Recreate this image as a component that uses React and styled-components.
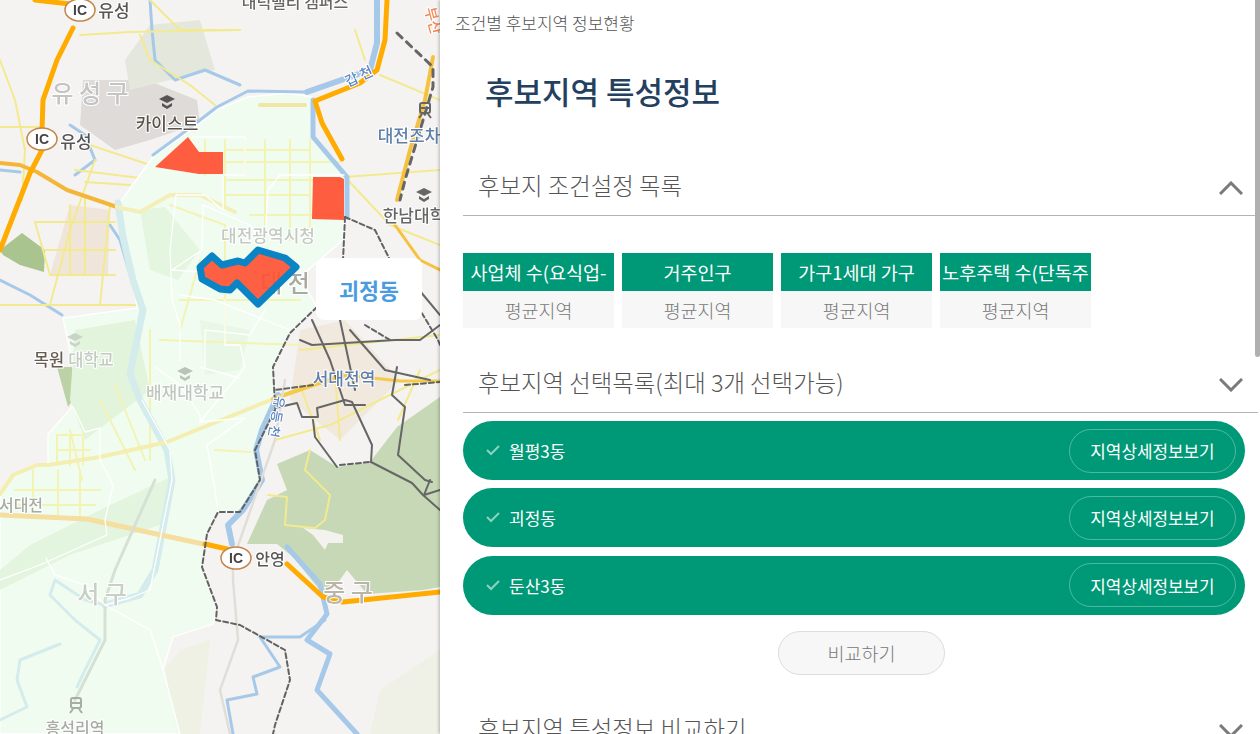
import React from "react";
import styled, { createGlobalStyle } from "styled-components";

const GREEN = "#009977";
const FONT = `"Noto Sans CJK KR", "Noto Sans", sans-serif`;

const GlobalStyle = createGlobalStyle`
  html, body {
    margin: 0;
    height: 100%;
    overflow: hidden;
    background: #fff;
    font-family: ${FONT};
  }
  * {
    box-sizing: border-box;
  }
`;

const Page = styled.div`
  display: flex;
  width: 1260px;
  height: 734px;
  overflow: hidden;
`;

const MapPane = styled.div`
  position: relative;
  flex: 0 0 440px;
  height: 734px;
  overflow: hidden;
  background: #f5f3f1;
`;

const MapSvg = styled.svg`
  display: block;
  width: 440px;
  height: 734px;
  filter: blur(0.5px);
`;

const RegionLabel = styled.div`
  position: absolute;
  left: 316px;
  top: 258px;
  width: 106px;
  height: 62px;
  display: flex;
  align-items: center;
  justify-content: center;
  background: #fff;
  border-radius: 8px;
  color: #4a9be0;
  font-size: 21.7px;
  font-weight: 700;
`;

const Panel = styled.div`
  position: relative;
  flex: 1;
  height: 734px;
  overflow: hidden;
  background: #fff;
  box-shadow: -1px 0 3px rgba(0, 0, 0, 0.25);
`;

const ScrollThumb = styled.div`
  position: absolute;
  top: 0;
  right: 0;
  width: 5px;
  height: 357px;
  background: #b0b0b0;
  border-radius: 0 0 3px 3px;
`;

const Crumb = styled.div`
  padding: 13px 0 0 15px;
  height: 72px;
  font-size: 17px;
  font-weight: 300;
  line-height: 20px;
  color: #555;
`;

const Title = styled.h1`
  margin: 0;
  padding-left: 45px;
  height: 83px;
  font-size: 31px;
  line-height: 38px;
  font-weight: 500;
  color: #24405f;
`;

const Content = styled.div`
  margin-left: 23px;
  width: 795px;
`;

const SectionHead = styled.div`
  display: flex;
  align-items: center;
  justify-content: space-between;
  height: 61px;
  padding: 0 15px;
  border-bottom: 1px solid #b4b4b4;
  font-size: 23.4px;
  font-weight: 300;
  color: #555;
`;

const Chevron = styled.svg`
  display: block;
  margin-top: 6px;
  width: 24px;
  height: 14px;
`;

const Tags = styled.div`
  display: flex;
  gap: 8px;
  margin: 37px 0 24px;
`;

const Tag = styled.div`
  width: 151px;
`;

const TagHead = styled.div`
  height: 38px;
  display: flex;
  align-items: center;
  justify-content: center;
  overflow: hidden;
  white-space: nowrap;
  background: ${GREEN};
  color: #fff;
  font-size: 18.5px;
`;

const TagBody = styled.div`
  height: 37px;
  display: flex;
  align-items: center;
  justify-content: center;
  background: #f7f7f7;
  color: #777;
  font-size: 18.4px;
  font-weight: 300;
`;

const Pills = styled.div`
  display: flex;
  flex-direction: column;
  gap: 8.4px;
  margin-top: 8px;
  width: 782px;
`;

const Pill = styled.div`
  height: 59px;
  display: flex;
  align-items: center;
  padding: 0 9px 0 23px;
  border-radius: 30px;
  background: ${GREEN};
  color: #fff;
  font-size: 17px;
`;

const Check = styled.svg`
  width: 14px;
  height: 11px;
  margin-right: 9px;
`;

const PillName = styled.span`
  flex: 1;
`;

const DetailButton = styled.button`
  width: 167px;
  height: 44px;
  padding: 0;
  border: 1px solid rgba(255, 255, 255, 0.3);
  border-radius: 22px;
  background: transparent;
  color: #fff;
  font-family: inherit;
  font-size: 16.9px;
`;

const CompareRow = styled.div`
  display: flex;
  justify-content: center;
  margin: 16px 0 23px;
  width: 797px;
`;

const CompareButton = styled.button`
  width: 167px;
  height: 44px;
  padding: 0;
  border: 1px solid #ddd;
  border-radius: 22px;
  background: #f7f7f7;
  color: #777;
  font-family: inherit;
  font-size: 18.5px;
  font-weight: 300;
`;

const tags = ["사업체 수(요식업-", "거주인구", "가구1세대 가구", "노후주택 수(단독주"];
const places = ["월평3동", "괴정동", "둔산3동"];

const pts = (list) => list.map((p) => p.join(",")).join(" ");

const Line = ({ p, c, w, dash, o }) => (
  <polyline
    points={pts(p)}
    fill="none"
    stroke={c}
    strokeWidth={w}
    strokeDasharray={dash}
    strokeOpacity={o}
    strokeLinejoin="round"
    strokeLinecap="round"
  />
);

const region = [[248, 97], [287, 93], [312, 97], [311, 137], [333, 157], [344, 177], [343, 240], [300, 277], [317, 307], [290, 333], [273, 367], [275, 387], [273, 410], [255, 450], [260, 480], [240, 512], [218, 512], [207, 534], [202, 567], [217, 607], [213, 624], [173, 637], [163, 669], [180, 734], [0, 734], [0, 494], [13, 475], [37, 465], [48, 465], [48, 434], [72, 407], [76, 380], [63, 318], [137, 308], [133, 280], [118, 205], [153, 157], [187, 133], [217, 110]];

const mountain = [[277, 464], [310, 450], [337, 467], [370, 462], [397, 427], [440, 397], [440, 587], [423, 590], [367, 594], [347, 570], [337, 584], [323, 594], [293, 557], [277, 544], [247, 544], [267, 500], [287, 490]];

const minorRoads = [
  [[0, 60], [15, 100], [25, 150], [22, 200]], [[80, 35], [130, 32], [240, 30]], [[140, 35], [150, 60], [190, 85], [215, 105]],
  [[0, 127], [40, 127]], [[90, 145], [150, 165]], [[35, 222], [115, 222]], [[35, 222], [50, 275], [115, 275]], [[0, 305], [140, 305]],
  [[95, 160], [70, 230], [50, 305]], [[110, 205], [100, 305]], [[75, 170], [140, 178]], [[85, 182], [130, 185]],
  [[45, 250], [115, 250]], [[70, 205], [70, 275]], [[85, 195], [85, 275]],
  [[345, 177], [440, 170]], [[380, 75], [440, 100]], [[355, 30], [365, 60]], [[345, 177], [390, 225], [440, 245]],
  [[300, 350], [440, 335]], [[275, 440], [330, 425], [440, 370]], [[300, 385], [320, 440]], [[335, 375], [340, 440]],
  [[310, 450], [305, 470], [330, 495], [325, 520], [315, 528], [285, 525], [287, 497], [268, 495]],
  [[420, 370], [398, 420]], [[150, 0], [180, 30], [240, 30]],
];

const paleRoads = [
  [[170, 205], [225, 225], [225, 340]], [[225, 140], [225, 205]], [[245, 140], [245, 175]], [[265, 140], [265, 240]], [[290, 140], [290, 240]], [[310, 140], [310, 240]], [[205, 140], [205, 175]],
  [[225, 150], [310, 150]], [[225, 162], [340, 162]], [[225, 180], [340, 180]], [[225, 195], [310, 195]], [[250, 215], [340, 215]],
  [[100, 400], [135, 470]], [[70, 430], [82, 480]], [[115, 385], [145, 460]],
  [[57, 435], [83, 435]], [[57, 450], [90, 450]], [[57, 435], [57, 465]], [[70, 435], [70, 465]], [[83, 435], [83, 465]],
  [[15, 490], [100, 490]], [[15, 505], [95, 505]], [[33, 470], [33, 512]], [[58, 470], [58, 515]], [[80, 470], [80, 515]],
  [[150, 330], [150, 460]], [[215, 450], [250, 452]], [[180, 300], [300, 300]], [[160, 340], [300, 345]], [[200, 260], [180, 330]],
];

const whiteLines = [
  [[193, 137], [245, 137], [245, 175], [223, 175]], [[223, 175], [223, 210], [205, 195], [176, 195], [170, 250], [172, 300], [180, 325], [180, 360]],
  [[203, 205], [202, 250], [172, 270]], [[203, 205], [250, 225], [260, 240]], [[344, 175], [280, 175], [268, 190], [265, 240]], [[172, 270], [200, 272]],
  [[180, 295], [215, 300], [265, 320], [290, 330]], [[265, 310], [250, 335], [205, 330], [205, 367]], [[155, 367], [180, 385], [200, 415], [200, 422], [245, 418], [207, 445], [215, 490], [218, 512]],
  [[73, 407], [85, 432], [100, 428], [100, 460], [113, 485], [105, 520], [107, 535], [40, 565], [0, 580]], [[142, 400], [170, 450], [172, 480], [150, 590], [130, 598], [105, 605]],
  [[46, 558], [55, 575], [85, 585], [105, 605], [150, 630], [163, 669]], [[225, 300], [225, 345], [240, 345], [245, 367], [200, 422]], [[200, 367], [240, 378]],
];

const riversUnder = [
  [[0, 170], [20, 172]], [[150, 0], [152, 30], [155, 60], [175, 80], [205, 70], [240, 85]], [[0, 280], [30, 295], [62, 315]],
  [[70, 125], [85, 135], [95, 160], [75, 175]], [[110, 225], [120, 240], [133, 285]],
];

const riversOver = [
  { p: [[377, 0], [377, 43], [370, 70], [307, 92]], w: 6 },
  { p: [[307, 92], [248, 91], [217, 107], [187, 130], [153, 155]], w: 3 },
  { p: [[313, 100], [313, 137], [347, 177], [347, 217]], w: 5 },
  { p: [[278, 395], [262, 430], [256, 450], [262, 480], [243, 510], [228, 525], [232, 544]], w: 6 },
  { p: [[287, 547], [320, 584], [327, 614], [307, 640], [330, 654], [317, 690], [357, 734]], w: 5 },
  { p: [[260, 637], [300, 637], [325, 620]], w: 3 },
  { p: [[260, 637], [280, 667], [253, 677], [257, 694], [227, 700], [233, 734]], w: 3 },
];

const paleRivers = [
  { p: [[118, 203], [123, 237], [133, 280], [143, 310], [130, 374], [140, 400], [167, 450], [172, 480], [155, 570], [140, 595], [105, 605]], w: 7 },
  { p: [[105, 605], [85, 600], [55, 580], [50, 595], [75, 620], [100, 640], [85, 670], [77, 687]], w: 3 },
  { p: [[60, 644], [20, 660], [17, 680], [27, 707], [0, 720]], w: 3 },
];

const dashed = [
  [[345, 217], [343, 260]], [[345, 217], [375, 230], [390, 260], [438, 340], [440, 345]], [[317, 307], [290, 333], [273, 367], [275, 405]],
  [[275, 410], [255, 450], [260, 480], [240, 512], [218, 512], [207, 534], [202, 567], [217, 607], [216, 620], [240, 625], [285, 650], [290, 680], [275, 725], [273, 734]],
  [[365, 325], [390, 340]], [[313, 385], [275, 390]], [[405, 385], [440, 382]], [[340, 465], [370, 462]],
];

const solid = [
  [[312, 320], [330, 360], [345, 405], [365, 405]], [[275, 408], [297, 403], [302, 417], [318, 417], [317, 408], [345, 400], [352, 402], [372, 445], [371, 462]],
  [[313, 420], [315, 437], [337, 467]], [[371, 462], [412, 483], [423, 495], [440, 510]], [[430, 480], [424, 495], [440, 490]],
  [[397, 367], [392, 395], [405, 407], [398, 455], [425, 480], [432, 482]], [[340, 320], [355, 390]], [[395, 340], [420, 340], [440, 325]],
  [[350, 330], [385, 370], [430, 380]], [[300, 340], [312, 345], [395, 340]], [[415, 285], [440, 315]],
];

const labels = [
  { t: "유성", x: 114, y: 17, s: 17, c: "#555" },
  { t: "대덕밸리 캠퍼스", x: 295, y: 8, s: 16, c: "#666" },
  { t: "유 성 구", x: 90, y: 102, s: 24, c: "#c4c4c4" },
  { t: "카이스트", x: 167, y: 130, s: 17, c: "#5c5248" },
  { t: "유성", x: 76, y: 148, s: 17, c: "#555" },
  { t: "대전조차", x: 409, y: 142, s: 17, c: "#5f7fa8" },
  { t: "한남대학", x: 414, y: 222, s: 17, c: "#666" },
  { t: "대전광역시청", x: 268, y: 242, s: 17, c: "#c3cac2" },
  { t: "대 전", x: 285, y: 292, s: 24, c: "#a9aba3" },
  { t: "목원", x: 49, y: 366, s: 16.5, c: "#665b50" },
  { t: "대학교", x: 91, y: 366, s: 16.5, c: "#c3cac2" },
  { t: "배재대학교", x: 185, y: 399, s: 17, c: "#c0c7bf" },
  { t: "서대전역", x: 344, y: 385, s: 17, c: "#5f7fa8" },
  { t: "서대전", x: 21, y: 511, s: 16, c: "#a6aca2" },
  { t: "안영", x: 270, y: 565, s: 16, c: "#555" },
  { t: "서 구", x: 102, y: 603, s: 24, c: "#c9cec6" },
  { t: "중 구", x: 348, y: 601, s: 24, c: "#b9b5a8" },
  { t: "흥석리역", x: 75, y: 734, s: 16, c: "#a6aca2" },
];

const IcBadge = ({ x, y }) => (
  <g>
    <ellipse cx={x} cy={y} rx={15} ry={11} fill="#fff" stroke="#c2854a" strokeWidth="1.5" />
    <text x={x} y={y + 5} textAnchor="middle" fontFamily={"Liberation Sans"} fontSize="14" fontWeight="700" fill="#444">IC</text>
  </g>
);

const Cap = ({ x, y, c }) => (
  <g fill={c}>
    <polygon points={`${x - 8},${y - 3} ${x},${y - 7} ${x + 8},${y - 3} ${x},${y + 1}`} />
    <path d={`M${x - 5} ${y + 1} l5 3 l5 -3 v3 l-5 3 l-5 -3 z`} />
  </g>
);

const Train = ({ x, y, c }) => (
  <g fill="none" stroke={c} strokeWidth="2">
    <rect x={x - 5} y={y - 7} width="10" height="10" rx="2" />
    <path d={`M${x - 5} ${y - 2} h10 M${x - 3} ${y + 4} l-3 4 M${x + 3} ${y + 4} l3 4`} />
  </g>
);

const MapPicture = () => (
  <MapSvg viewBox="0 0 440 734">
    <polygon points={pts([[147, 80], [197, 100], [200, 123], [150, 140], [115, 150], [80, 125], [83, 80]])} fill="#dedbd9" />
    <polygon points={pts([[125, 60], [150, 25], [200, 20], [215, 70], [170, 80], [130, 90]])} fill="#e4e8dc" />
    <polygon points={pts([[0, 250], [22, 233], [45, 250], [44, 272], [20, 265], [3, 255]])} fill="#a9c48e" />
    <polygon points={pts([[57, 367], [72, 367], [76, 395], [68, 407], [62, 385]])} fill="#bdd1a6" />
    <polygon points={pts([[300, 330], [345, 320], [400, 380], [340, 440], [290, 400]])} fill="#f1e9de" />
    <polygon points={pts([[70, 205], [110, 210], [108, 275], [50, 275]])} fill="#efe5da" />
    <polygon points={pts(mountain)} fill="#c6d8b5" />
    <polygon points={pts([[303, 528], [325, 530], [343, 535], [343, 543], [328, 543], [325, 550], [313, 535]])} fill="#f3f2ee" />
    <polygon points={pts([[165, 669], [180, 650], [210, 640], [200, 734], [175, 734]])} fill="#eef1e4" />
    <polygon points={pts([[380, 690], [440, 650], [440, 734], [370, 734]])} fill="#eff1e6" />
    {riversUnder.map((p, i) => <Line key={i} p={p} c="#a6c9ea" w={3} />)}
    {minorRoads.map((p, i) => <Line key={i} p={p} c="#f3ea8f" w={2} />)}
    <Line p={[[433, 57], [425, 100], [410, 150], [397, 200]]} c="#f6c23e" w={4} />
    <Line p={[[397, 33], [433, 67], [433, 87], [405, 180], [400, 200]]} c="#666" w={3} dash="7 6" />
    <Line p={[[395, 225], [420, 260], [440, 270]]} c="#f6c23e" w={3} />
    <Line p={[[0, 163], [20, 165], [37, 172], [67, 190], [117, 207]]} c="#f4b638" w={4} />
    <polygon points={pts(region)} fill="#f0fcf1" fillOpacity="0.93" stroke="#fff" strokeWidth="1.3" />
    <polygon points={pts([[140, 210], [165, 207], [200, 250], [178, 280], [150, 270]])} fill="#e4f5e0" />
    <polygon points={pts([[30, 545], [110, 505], [175, 475], [160, 525], [70, 555], [0, 590], [0, 570]])} fill="#e3f5df" />
    <polygon points={pts([[75, 330], [135, 320], [150, 390], [85, 440], [70, 400]])} fill="#e3f4dc" />
    <polygon points={pts([[200, 320], [250, 330], [240, 370], [205, 375]])} fill="#e9f7e6" />
    {paleRoads.map((p, i) => <Line key={i} p={p} c="#f3f3b4" w={2} />)}
    {paleRivers.map((r, i) => <Line key={i} p={r.p} c="#d5eced" w={r.w} />)}
    {riversOver.map((r, i) => <Line key={i} p={r.p} c="#a6c9ea" w={r.w} />)}
    <Line p={[[260, 105], [305, 105]]} c="#f2e5a6" w={4} />
    <Line p={[[117, 207], [140, 212], [170, 195], [200, 195], [235, 212]]} c="#f4efb8" w={4} />
    <Line p={[[0, 515], [87, 519], [203, 544]]} c="#f5dfa0" w={5} />
    <Line p={[[0, 494], [13, 475], [37, 465], [48, 465], [100, 457], [167, 442], [273, 399]]} c="#f4eeb0" w={4} />
    <Line p={[[273, 399], [313, 385], [345, 375]]} c="#f5ca4a" w={4} />
    <Line p={[[345, 375], [400, 381], [440, 381]]} c="#f5ca4a" w={3} />
    <Line p={[[230, 734], [220, 690], [238, 640], [233, 580], [233, 560], [275, 440], [285, 380]]} c="#dfdfd8" w={2.5} />
    <Line p={[[75, 700], [105, 640], [105, 600], [115, 570], [155, 480]]} c="#d4e1d4" w={3} />
    {whiteLines.map((p, i) => <Line key={i} p={p} c="#fff" w={1.3} />)}
    <Line p={[[35, 0], [70, 4]]} c="#ffab00" w={5} />
    <Line p={[[73, 28], [57, 60], [43, 100], [42, 130], [42, 150], [30, 173], [0, 250]]} c="#ffab00" w={5} />
    <Line p={[[387, 0], [385, 40], [377, 70], [360, 83], [315, 101], [322, 123], [342, 159]]} c="#ffab00" w={5} />
    <Line p={[[205, 544], [240, 552]]} c="#ffab00" w={5} />
    <Line p={[[287, 564], [323, 597], [343, 602], [440, 592]]} c="#ffab00" w={5} />
    {dashed.map((p, i) => <Line key={i} p={p} c="#626262" w={2} dash="5 3" />)}
    {solid.map((p, i) => <Line key={i} p={p} c="#666" w={2} />)}
    <polygon points={pts([[155, 167], [188, 137], [199, 152], [223, 152], [223, 174], [199, 174]])} fill="#ff5030" fillOpacity="0.92" />
    <polygon points={pts([[313, 177], [340, 177], [344, 179], [344, 220], [312, 219]])} fill="#ff5030" fillOpacity="0.92" />
    <g fontFamily={FONT} textAnchor="middle" fontWeight="500" style={{ paintOrder: "stroke" }} stroke="#fff" strokeWidth="2">
      {labels.map((l) => (
        <text key={l.t + l.x} x={l.x} y={l.y} fontSize={l.s} fill={l.c}>{l.t}</text>
      ))}
      <text x={0} y={0} fontSize="14" fill="#5f87c0" transform="translate(361 81) rotate(-25)">갑 천</text>
      <text x={0} y={0} fontSize="13" fill="#5f87c0" transform="translate(272 416) rotate(100)">유 등 천</text>
      <text x={0} y={0} fontSize="15" fill="#f08a5a" transform="translate(428 22) rotate(75)">부산</text>
    </g>
    <polygon
      points={pts([[212, 256], [222, 265], [238, 261], [245, 263], [258, 250], [285, 258], [296, 267], [258, 304], [237, 283], [230, 290], [220, 289], [202, 279], [200, 267]])}
      fill="#ff5030"
      fillOpacity="0.9"
      stroke="#0a84c4"
      strokeWidth="7"
      strokeLinejoin="round"
    />
    <Cap x={167} y={102} c="#555" />
    <Cap x={424} y={195} c="#666" />
    <Cap x={75} y={340} c="#c9d3c9" />
    <Cap x={185} y={374} c="#b9c3b9" />
    <Train x={425} y={110} c="#666" />
    <Train x={76} y={705} c="#a8aca6" />
    <IcBadge x={80} y={10} />
    <IcBadge x={42} y={139} />
    <IcBadge x={236} y={558} />
  </MapSvg>
);

const ChevronIcon = ({ up }) => (
  <Chevron viewBox="0 0 24 14">
    <polyline
      points={up ? "1,13 12,2 23,13" : "1,1 12,12 23,1"}
      fill="none"
      stroke="#7a7a7a"
      strokeWidth="3"
    />
  </Chevron>
);

export default function App() {
  return (
    <Page>
      <GlobalStyle />
      <MapPane>
        <MapPicture />
        <RegionLabel>괴정동</RegionLabel>
      </MapPane>
      <Panel>
        <Crumb>조건별 후보지역 정보현황</Crumb>
        <Title>후보지역 특성정보</Title>
        <Content>
          <SectionHead>
            <span>후보지 조건설정 목록</span>
            <ChevronIcon up />
          </SectionHead>
          <Tags>
            {tags.map((tag) => (
              <Tag key={tag}>
                <TagHead>{tag}</TagHead>
                <TagBody>평균지역</TagBody>
              </Tag>
            ))}
          </Tags>
          <SectionHead>
            <span>후보지역 선택목록(최대 3개 선택가능)</span>
            <ChevronIcon />
          </SectionHead>
          <Pills>
            {places.map((place) => (
              <Pill key={place}>
                <Check viewBox="0 0 14 11">
                  <polyline points="1,5 5,9 13,1" fill="none" stroke="rgba(255,255,255,0.55)" strokeWidth="2" />
                </Check>
                <PillName>{place}</PillName>
                <DetailButton>지역상세정보보기</DetailButton>
              </Pill>
            ))}
          </Pills>
          <CompareRow>
            <CompareButton>비교하기</CompareButton>
          </CompareRow>
          <SectionHead>
            <span>후보지역 특성정보 비교하기</span>
            <ChevronIcon />
          </SectionHead>
        </Content>
        <ScrollThumb />
      </Panel>
    </Page>
  );
}
